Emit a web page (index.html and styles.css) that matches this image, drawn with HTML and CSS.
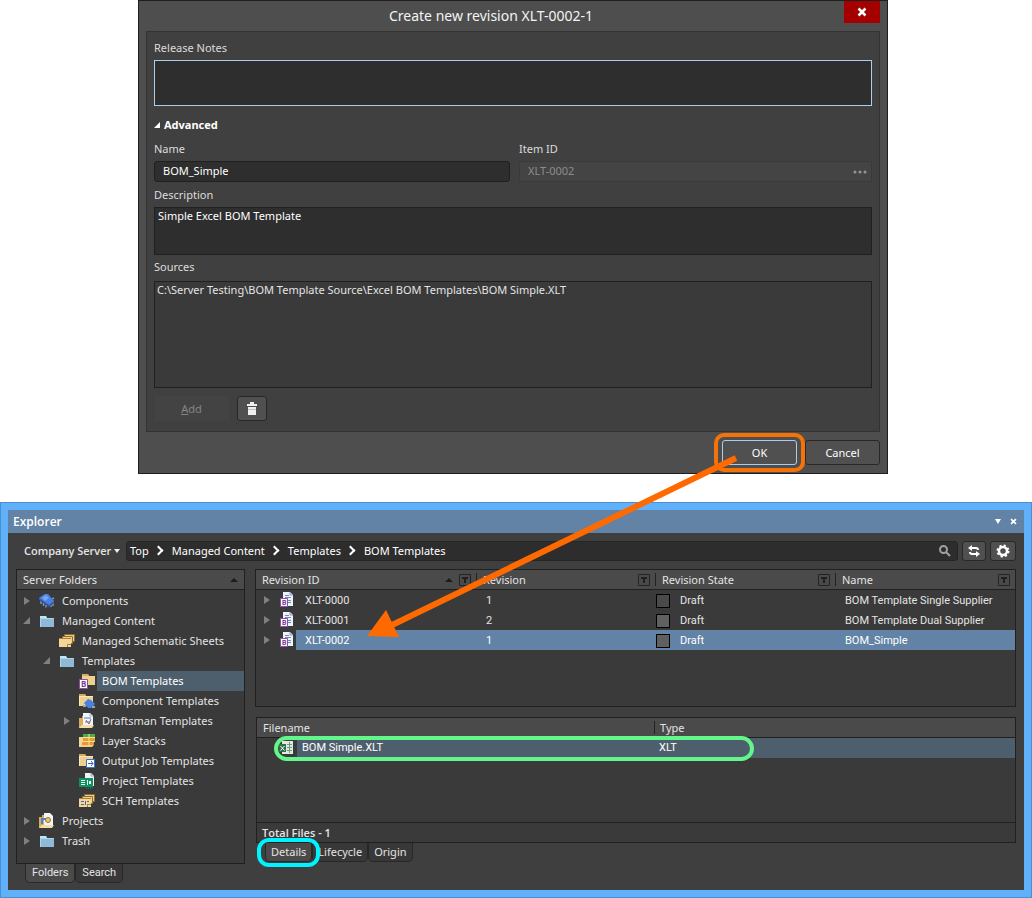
FILE: index.html
```html
<!DOCTYPE html>
<html lang="en">
<head>
    <meta charset="UTF-8">
    <meta name="viewport" content="width=device-width, initial-scale=1.0">
    <title>Create new revision</title>
    <link rel="stylesheet" href="styles.css">
</head>
<body>
    <!-- Shared icons -->
    <svg class="sprite" aria-hidden="true">
        <symbol id="folder-blue" viewBox="0 0 16 16">
            <path d="M1 3h6l1 2h7v9H1z" fill="#8fb9d6"/>
            <path d="M1 3h6l1 2H1z" fill="#bfe6f2"/>
            <path d="M1.500 14V5.500h13" fill="none" stroke="#a9d8ea"/>
        </symbol>
        <symbol id="folder-tan" viewBox="0 0 16 16">
            <path d="M0 1h6l1 2h7v10H0z" fill="#f0d090"/>
            <path d="M0 1h6l1 2H0z" fill="#d9ab5c"/>
            <path d="M.5 13V3.500h13.500" fill="none" stroke="#fbe8bb"/>
        </symbol>
        <symbol id="sheets" viewBox="0 0 16 16">
            <path d="M5.500 1.500h10v7h-10z" fill="#efcf8c" stroke="#8f6a2d"/>
            <path d="M3.500 3.500h10v7h-10z" fill="#efcf8c" stroke="#8f6a2d"/>
            <path d="M0 5h12v9H0z" fill="#f4d797"/>
            <path d="M0 5h12v1H0zM8 11h4v1H8zM8 11h1v3H8z" fill="#a9813e"/>
        </symbol>
        <symbol id="chip" viewBox="0 0 16 16">
            <path d="M2 8v3M4.500 10v3M7 12v2.500M13 6l2-1M14 9v4M12 11v3" stroke="#8c95a6" stroke-width="1.500"/>
            <path d="M0 5l6-4h3l6 7v2l-5 4L0 7z" fill="#2f57a8"/>
            <path d="M0 5l6-4h3l6 7-5 4z" fill="#4b7fe0"/>
            <path d="M3 5l4-3 3 3-4 3z" fill="#78a5f5"/>
        </symbol>
        <symbol id="bom-folder" viewBox="0 0 16 16">
            <path d="M3 1h6l1 2h6v9H3z" fill="#f0d090"/>
            <path d="M3 1h6l1 2H3z" fill="#d9ab5c"/>
            <path d="M.5 6.500h8v9h-8z" fill="#fff" stroke="#8a4fa3"/>
            <text x="2" y="14" font-size="8" font-weight="bold" fill="#7b3b98">B</text>
        </symbol>
        <symbol id="component-folder" viewBox="0 0 16 16">
            <use href="#folder-tan"/>
            <path d="M5 10l4-4 3 1 4 4-4 4H9z" fill="#4b7fe0"/>
            <path d="M4 12h3v2H4zM13 13h3v2h-3z" fill="#9aa5b8"/>
        </symbol>
        <symbol id="draftsman" viewBox="0 0 16 16">
            <path d="M0 5h3V3h9v12H0z" fill="#d9ab5c"/>
            <path d="M4 0h7l3 3v10H4z" fill="#f2f5fb"/>
            <path d="M11 0v3h3" fill="none" stroke="#9fb0d0"/>
            <path d="M5 5h7M7 7l3 4 2-5" fill="none" stroke="#5878c0"/>
            <path d="M6 9h5" stroke="#c8504a"/>
            <path d="M0 15l3-3h12l-2 3z" fill="#f6dda4"/>
        </symbol>
        <symbol id="layers" viewBox="0 0 16 16">
            <path d="M0 4h4v10H0z" fill="#f4d797"/>
            <path d="M0 14h13l2-2H3z" fill="#f0cf8d"/>
            <path d="M4 1h12v3H4z" fill="#4caa50"/>
            <path d="M4 5h12v3H4zM3 9h12v3H3z" fill="#e9973a"/>
            <path d="M10 1v11M4 4.500h12M4 8.500h12" stroke="#f6e388"/>
        </symbol>
        <symbol id="outjob" viewBox="0 0 16 16">
            <use href="#folder-tan"/>
            <path d="M7.500 6.500h8v8h-8z" fill="#fff" stroke="#3f72c4"/>
            <path d="M9 10.500h5M12 8l2 2.500-2 2.500" fill="none" stroke="#2e62b8"/>
        </symbol>
        <symbol id="project-template" viewBox="0 0 16 16">
            <path d="M6 0h6l3 3v10H6z" fill="#f0f4f6"/>
            <path d="M12 0v3h3" fill="none" stroke="#98a8b4"/>
            <path d="M0 5h14v9H0z" fill="#0f9160"/>
            <path d="M2 7.500h4M2 9.500h4M2 11.500h4M8.500 7v5" stroke="#e8fff4"/>
            <path d="M10 8h2v3h-2z" fill="#e8fff4"/>
            <path d="M7 15h8" stroke="#0f9160" stroke-dasharray="1 1"/>
        </symbol>
        <symbol id="sch-template" viewBox="0 0 16 16">
            <use href="#sheets"/>
            <path d="M2 8.500h3M2 11.500h3M6.500 8v4M8 8.500h2" stroke="#4d62b8"/>
        </symbol>
        <symbol id="projects" viewBox="0 0 16 16">
            <path d="M0 4h3V2h9v13H0z" fill="#d9ab5c"/>
            <path d="M5 0h6l3 3v9H5z" fill="#f2f5fb"/>
            <path d="M2 5h5v2H4v4H2z" fill="#4a83c9"/>
            <circle cx="9" cy="7" r="2.500" fill="#f0c565" stroke="#9a7431"/>
            <path d="M0 15l3-3h12l-2 3z" fill="#f6dda4"/>
        </symbol>
        <symbol id="bom-doc" viewBox="0 0 16 16">
            <path d="M4 0h7l3 3v11H4z" fill="#eef2fa"/>
            <path d="M11 0v3h3" fill="none" stroke="#8495b5"/>
            <path d="M6 3.500h4M6 5.500h6M9 8.500h3M9 10.500h3" stroke="#7488b0"/>
            <path d="M1.500 6.500h7v8h-7z" fill="#fff" stroke="#8a4fa3"/>
            <text x="3" y="13" font-size="7" font-weight="bold" fill="#7b3b98">B</text>
        </symbol>
        <symbol id="excel" viewBox="0 0 16 16">
            <path d="M4 1h11v13H4z" fill="#dfe9e2"/>
            <path d="M9 4.500h5M9 7.500h5M9 10.500h5M11.500 2v11" stroke="#6f9c7e"/>
            <path d="M1 4h7v8H1z" fill="#2f6f4a"/>
            <path d="M2.500 6l4 4.500M6.500 6l-4 4.500" stroke="#fff"/>
        </symbol>
        <symbol id="funnel" viewBox="0 0 12 12">
            <path d="M.5.5h11v11H.5z" fill="none" stroke="#242424"/>
            <path d="M3 3h6v2H7v4H5V5H3z" fill="#202020"/>
        </symbol>
        <symbol id="cross" viewBox="0 0 10 10">
            <path d="M1.500 1.500l7 7M8.500 1.500l-7 7" stroke="#fff" stroke-width="2.500"/>
        </symbol>
    </svg>

    <main class="stage">
        <section class="dialog" aria-label="Create new revision">
            <header class="dialog-title">
                <h1>Create new revision XLT-0002-1</h1>
                <button type="button" class="dialog-close" aria-label="Close"><svg width="10" height="10"><use href="#cross"/></svg></button>
            </header>

            <form class="dialog-form">
                <label for="notes">Release Notes</label>
                <textarea id="notes" class="notes"></textarea>

                <details open>
                    <summary><svg width="6" height="6"><path d="M6 0v6H0z" fill="#fff"/></svg>Advanced</summary>
                    <div class="form-row">
                        <div class="field">
                            <label for="name">Name</label>
                            <input type="text" id="name" value="BOM_Simple">
                        </div>
                        <div class="field">
                            <label for="itemId">Item ID</label>
                            <div class="item-id">
                                <input type="text" id="itemId" value="XLT-0002" disabled>
                                <button type="button" disabled aria-label="Browse"><svg width="14" height="4"><circle cx="2" cy="2" r="1.500"/><circle cx="7" cy="2" r="1.500"/><circle cx="12" cy="2" r="1.500"/></svg></button>
                            </div>
                        </div>
                    </div>
                    <label for="description">Description</label>
                    <textarea id="description" class="description">Simple Excel BOM Template</textarea>
                    <div class="label" id="sourcesLabel">Sources</div>
                    <ul class="sources" aria-labelledby="sourcesLabel">
                        <li>C:\Server Testing\BOM Template Source\Excel BOM Templates\BOM Simple.XLT</li>
                    </ul>
                    <div class="source-actions">
                        <button type="button" class="add" disabled><u>A</u>dd</button>
                        <button type="button" class="btn trash" aria-label="Delete">
                            <svg width="10" height="13"><path d="M3 0h4v2H3zM0 2h10v2H0zM1 5h8v8H1z" fill="#f0f0f0"/><path d="M1 7.500h8" stroke="#c4c4c4"/></svg>
                        </button>
                    </div>
                </details>
            </form>

            <footer class="dialog-footer">
                <div class="callout callout-ok"><button type="button" class="btn ok">OK</button></div>
                <button type="button" class="btn">Cancel</button>
            </footer>
        </section>

        <section class="explorer" aria-label="Explorer">
            <header class="explorer-title">
                <h2>Explorer</h2>
                <button type="button" aria-label="Panel menu"><svg width="6" height="5"><path d="M0 0h6L3 5z" fill="#fff"/></svg></button>
                <button type="button" aria-label="Close panel"><svg width="7" height="7"><use href="#cross"/></svg></button>
            </header>

            <div class="toolbar">
                <button type="button" class="server">Company Server<svg width="6" height="4"><path d="M0 0h6L3 4z" fill="#eee"/></svg></button>
                <nav class="breadcrumb" aria-label="Path">
                    <a href="#">Top</a>
                    <a href="#">Managed Content</a>
                    <a href="#">Templates</a>
                    <a href="#">BOM Templates</a>
                    <button type="button" class="search" aria-label="Search"><svg width="12" height="12"><circle cx="4.500" cy="4.500" r="3.500" fill="none" stroke="#a0a0a0" stroke-width="2"/><path d="M7 7l4 4" stroke="#a0a0a0" stroke-width="2"/></svg></button>
                </nav>
                <button type="button" class="btn tool" aria-label="Refresh">
                    <svg width="12" height="12"><path d="M4 0v2h4q3 0 3 3H9Q9 4 8 4H4v2L0 3zM8 12v-2H4q-3 0-3-3h2q0 1 1 1h4V6l4 3z" fill="#fff"/></svg>
                </button>
                <button type="button" class="btn tool" aria-label="Settings">
                    <svg width="14" height="14" viewBox="0 0 14 14"><circle cx="7" cy="7" r="4" fill="none" stroke="#fff" stroke-width="2.500"/><circle cx="7" cy="7" r="5.500" fill="none" stroke="#fff" stroke-width="2" stroke-dasharray="2.160 2.160"/></svg>
                </button>
            </div>

            <div class="columns">
                <aside>
                    <div class="panel folders">
                        <div class="panel-head">Server Folders<svg width="8" height="4"><path d="M0 4l4-4 4 4z" fill="#1c1c1c"/></svg></div>
                        <ul class="tree">
                            <li><i class="closed"></i><svg class="icon"><use href="#chip"/></svg><span>Components</span></li>
                            <li><i class="open"></i><svg class="icon"><use href="#folder-blue"/></svg><span>Managed Content</span></li>
                            <li class="level-1"><i></i><svg class="icon"><use href="#sheets"/></svg><span>Managed Schematic Sheets</span></li>
                            <li class="level-1"><i class="open"></i><svg class="icon"><use href="#folder-blue"/></svg><span>Templates</span></li>
                            <li class="level-2 selected"><i></i><svg class="icon"><use href="#bom-folder"/></svg><span>BOM Templates</span></li>
                            <li class="level-2"><i></i><svg class="icon"><use href="#component-folder"/></svg><span>Component Templates</span></li>
                            <li class="level-2"><i class="closed"></i><svg class="icon"><use href="#draftsman"/></svg><span>Draftsman Templates</span></li>
                            <li class="level-2"><i></i><svg class="icon"><use href="#layers"/></svg><span>Layer Stacks</span></li>
                            <li class="level-2"><i></i><svg class="icon"><use href="#outjob"/></svg><span>Output Job Templates</span></li>
                            <li class="level-2"><i></i><svg class="icon"><use href="#project-template"/></svg><span>Project Templates</span></li>
                            <li class="level-2"><i></i><svg class="icon"><use href="#sch-template"/></svg><span>SCH Templates</span></li>
                            <li><i class="closed"></i><svg class="icon"><use href="#projects"/></svg><span>Projects</span></li>
                            <li><i class="closed"></i><svg class="icon"><use href="#folder-blue"/></svg><span>Trash</span></li>
                        </ul>
                    </div>
                    <div class="tabs folder-tabs">
                        <button type="button" class="active">Folders</button>
                        <button type="button">Search</button>
                    </div>
                </aside>

                <div class="content">
                    <div class="panel revisions">
                        <table>
                            <colgroup><col class="col-id"><col class="col-rev"><col class="col-state"><col></colgroup>
                            <thead>
                                <tr>
                                    <th><div class="th">Revision ID<svg class="sort" width="8" height="4"><path d="M0 4l4-4 4 4z" fill="#1c1c1c"/></svg><button type="button" aria-label="Filter by revision ID"><svg width="12" height="12"><use href="#funnel"/></svg></button></div></th>
                                    <th><div class="th">Revision<button type="button" aria-label="Filter by revision"><svg width="12" height="12"><use href="#funnel"/></svg></button></div></th>
                                    <th><div class="th">Revision State<button type="button" aria-label="Filter by state"><svg width="12" height="12"><use href="#funnel"/></svg></button></div></th>
                                    <th><div class="th">Name<button type="button" aria-label="Filter by name"><svg width="12" height="12"><use href="#funnel"/></svg></button></div></th>
                                </tr>
                            </thead>
                            <tbody>
                                <tr>
                                    <td><div class="id-cell"><i class="closed"></i><svg class="icon"><use href="#bom-doc"/></svg><span>XLT-0000</span></div></td>
                                    <td>1</td>
                                    <td><div class="state"><b class="swatch"></b>Draft</div></td>
                                    <td>BOM Template Single Supplier</td>
                                </tr>
                                <tr>
                                    <td><div class="id-cell"><i class="closed"></i><svg class="icon"><use href="#bom-doc"/></svg><span>XLT-0001</span></div></td>
                                    <td>2</td>
                                    <td><div class="state"><b class="swatch light"></b>Draft</div></td>
                                    <td>BOM Template Dual Supplier</td>
                                </tr>
                                <tr class="selected">
                                    <td><div class="id-cell"><i class="closed"></i><svg class="icon"><use href="#bom-doc"/></svg><span>XLT-0002</span></div></td>
                                    <td>1</td>
                                    <td><div class="state"><b class="swatch light"></b>Draft</div></td>
                                    <td>BOM_Simple</td>
                                </tr>
                            </tbody>
                        </table>
                    </div>

                    <div class="panel files">
                        <div class="file-list">
                            <table>
                                <colgroup><col class="col-file"><col></colgroup>
                                <thead>
                                    <tr><th><div class="th">Filename</div></th><th><div class="th">Type</div></th></tr>
                                </thead>
                                <tbody>
                                    <tr class="selected">
                                        <td><div class="file-cell"><svg class="icon"><use href="#excel"/></svg><span>BOM Simple.XLT</span></div></td>
                                        <td class="type">XLT</td>
                                    </tr>
                                </tbody>
                            </table>
                            <div class="file-mark"></div>
                        </div>
                        <div class="total">Total Files - 1</div>
                    </div>
                    <div class="tabs detail-tabs">
                        <div class="callout callout-details"><button type="button" class="active">Details</button></div>
                        <button type="button">Lifecycle</button>
                        <button type="button">Origin</button>
                    </div>
                </div>
            </div>
        </section>

        <!-- Arrow from the OK button to the new revision -->
        <svg class="arrow" width="1032" height="898" aria-hidden="true">
            <path d="M736 458L390 626" stroke="#ff6a00" stroke-width="6"/>
            <path d="M367 636l19-26 13 27z" fill="#ff6a00"/>
        </svg>
    </main>
</body>
</html>
```

FILE: styles.css
```css
* {
    box-sizing: border-box;
}
body {
    margin: 0;
    background: #fff;
    color: #e4e4e4;
    font-family: "Noto Sans", "Open Sans", sans-serif;
    font-size: 11px;
    line-height: 20px;
}
h1, h2, ul {
    margin: 0;
    padding: 0;
    list-style: none;
}
button, input, textarea {
    margin: 0;
    padding: 0;
    border: 0;
    background: none;
    color: inherit;
    font: inherit;
}
button {
    cursor: pointer;
}
svg {
    display: block;
    flex: none;
}
.sprite {
    display: none;
}
.stage {
    position: relative;
}
.arrow {
    position: absolute;
    top: 0;
    left: 0;
    pointer-events: none;
}
.icon {
    width: 16px;
    height: 16px;
}
.btn {
    display: flex;
    align-items: center;
    justify-content: center;
    height: 25px;
    border: 1px solid #282828;
    border-radius: 3px;
    background: #505050;
    color: #fff;
}

/* Dialog */
.dialog {
    margin: 0 144px 28px 138px;
    padding: 0 7px;
    border: 1px solid #1e1e1e;
    background: #4e4e4e;
}
.dialog-title {
    display: flex;
    height: 30px;
}
.dialog-title h1 {
    flex: 1;
    padding-right: 8px;
    font-size: 14px;
    font-weight: normal;
    line-height: 30px;
    text-align: center;
    color: #f4f4f4;
}
.dialog-close {
    display: flex;
    align-items: center;
    justify-content: center;
    width: 36px;
    height: 22px;
    background: #a40000;
}
.dialog-form {
    padding: 4px 7px 10px;
    border: 1px solid #333;
    background: #404040;
}
.dialog-form label, .label {
    display: block;
    line-height: 24px;
    color: #dcdcdc;
}
.dialog-form textarea {
    display: block;
    width: 100%;
    padding: 0 3px;
    border: 1px solid #202020;
    background: #2e2e2e;
    color: #fff;
    line-height: 15px;
    resize: none;
}
.dialog-form .notes {
    height: 46px;
    border-color: #a9cdea;
}
.dialog-form .description {
    height: 48px;
}
summary {
    display: flex;
    align-items: center;
    gap: 4px;
    padding-top: 7px;
    line-height: 24px;
    font-weight: bold;
    color: #fff;
    cursor: pointer;
}
.form-row {
    display: grid;
    grid-template-columns: 356px 1fr;
    gap: 9px;
    padding-bottom: 1px;
}
.form-row input {
    display: block;
    width: 100%;
    height: 21px;
    padding: 0 8px 2px;
    border: 1px solid #202020;
    border-radius: 3px;
    background: #2e2e2e;
    color: #fff;
}
.item-id {
    display: flex;
    align-items: center;
    height: 21px;
    padding-right: 4px;
    border: 1px solid #3a3a3a;
    background: #444;
    color: #8c8c8c;
}
.item-id input {
    flex: 1;
    border: 0;
    background: none;
    color: inherit;
}
.item-id svg {
    fill: #969696;
}
.sources {
    height: 107px;
    margin-top: 2px;
    padding: 0 2px;
    border: 1px solid #202020;
    background: #3a3a3a;
    line-height: 16px;
}
.source-actions {
    display: flex;
    gap: 8px;
    margin-top: 8px;
}
.add {
    width: 75px;
    background: #434343;
    color: #858585;
}
.trash {
    width: 30px;
}
.dialog-footer {
    display: flex;
    justify-content: flex-end;
    gap: 8px;
    padding: 8px 0;
}
.dialog-footer .btn {
    width: 75px;
}
.dialog-footer .ok {
    border-color: #a9cdea;
}

/* Highlight rings */
.callout {
    display: flex;
    position: relative;
}
.callout::after {
    content: "";
    position: absolute;
    pointer-events: none;
}
.callout-ok::after {
    inset: -7px -8px;
    border: 4px solid #f47208;
    border-radius: 10px;
}
.callout-details::after {
    inset: -5px -8px;
    border: 4px solid #00f4ff;
    border-radius: 12px;
    z-index: 1;
}
.file-mark {
    position: absolute;
    top: 18px;
    left: 17px;
    width: 480px;
    height: 25px;
    border: 4px solid #63f78b;
    border-radius: 13px;
    pointer-events: none;
}

/* Explorer */
.explorer {
    border: 8px solid #61b0fa;
    outline: 1px solid #4b8fd0;
    outline-offset: -1px;
    background: #3f3f3f;
}
.explorer-title {
    display: flex;
    align-items: center;
    gap: 9px;
    height: 23px;
    padding: 0 7px 0 5px;
    background: #6283a5;
    color: #fff;
}
.explorer-title h2 {
    flex: 1;
    font-family: "Open Sans", "Noto Sans", sans-serif;
    font-size: 12px;
    font-weight: 600;
    line-height: 22px;
}
.toolbar {
    display: flex;
    gap: 4px;
    padding: 8px 8px 8px 16px;
}
.server {
    display: flex;
    align-items: center;
    gap: 3px;
    width: 98px;
    font-family: "Open Sans", "Noto Sans", sans-serif;
    font-weight: 600;
    white-space: nowrap;
}
.breadcrumb {
    display: flex;
    align-items: center;
    flex: 1;
    height: 20px;
    padding: 0 6px 0 3px;
    border: 1px solid #252525;
    border-radius: 3px;
    background: #2d2d2d;
}
.breadcrumb a {
    color: #fff;
    text-decoration: none;
}
.breadcrumb a + a::before {
    content: "";
    display: inline-block;
    width: 5px;
    height: 5px;
    margin: 0 10px 1px 6px;
    border: solid #fff;
    border-width: 2px 2px 0 0;
    transform: rotate(45deg);
}
.search {
    margin-left: auto;
}
.tool {
    width: 24px;
    height: 20px;
}
.tool:last-child {
    width: 26px;
}
.columns {
    display: grid;
    grid-template-columns: 229px 1fr;
    gap: 10px;
    padding: 0 8px 7px;
}
.panel {
    border: 1px solid #202020;
    background: #3a3a3a;
}
.panel-head {
    display: flex;
    align-items: center;
    justify-content: space-between;
    height: 20px;
    padding: 0 6px;
    border-bottom: 1px solid #202020;
    background: #4a4a4a;
}
.folders {
    height: 295px;
}
.tree {
    padding-top: 1px;
}
.tree li {
    display: flex;
    align-items: center;
    padding-left: 6px;
}
.tree .level-1 {
    padding-left: 26px;
}
.tree .level-2 {
    padding-left: 46px;
}
.tree span {
    flex: 1;
    margin-left: 2px;
    padding-left: 5px;
    white-space: nowrap;
}
.tree .selected span {
    background: #4d5f6d;
    color: #fff;
}
.tree i, .id-cell i {
    flex: none;
    width: 16px;
    height: 8px;
}
.closed::before, .open::before {
    content: "";
    display: block;
    width: 7px;
    height: 8px;
    background: #808080;
    clip-path: polygon(1px 0, 100% 50%, 1px 100%);
}
.open::before {
    height: 7px;
    clip-path: polygon(100% 0, 100% 100%, 0 100%);
}
.tabs {
    display: flex;
    padding-left: 9px;
}
.tabs button {
    height: 19px;
    padding: 0 6px;
    border: 1px solid #282828;
    border-top: 0;
    border-radius: 0 0 5px 5px;
    background: #383838;
    line-height: 18px;
}
.tabs .active {
    background: #4a4a4a;
}
.folder-tabs {
    font-family: Roboto, "Liberation Sans", sans-serif;
}
.detail-tabs {
    padding-left: 10px;
}
.detail-tabs button {
    padding: 0 5px;
}

/* Lists */
table {
    width: 100%;
    border-collapse: separate;
    border-spacing: 0;
    table-layout: fixed;
}
th, td {
    height: 20px;
    padding: 0;
    font-weight: normal;
    text-align: left;
    white-space: nowrap;
}
th {
    border-bottom: 1px solid #202020;
    background: #4a4a4a;
}
.th {
    display: flex;
    align-items: center;
    height: 19px;
    padding: 0 5px 0 6px;
}
th + th {
    background: linear-gradient(#222, #222) 0 3px / 1px 13px no-repeat, #4a4a4a;
}
.revisions th + th .th {
    padding-left: 7px;
}
.th button {
    margin-left: auto;
}
.th .sort {
    margin-left: auto;
}
.th .sort + button {
    margin-left: 6px;
}
td {
    padding: 2px 0 0 10px;
    font-family: Roboto, "Liberation Sans", sans-serif;
    line-height: 18px;
}
td:first-child {
    padding: 0;
}
.col-id {
    width: 220px;
}
.col-rev {
    width: 179px;
}
.col-state {
    width: 180px;
}
.col-file {
    width: 397px;
}
.id-cell, .file-cell, .state {
    display: flex;
    align-items: center;
}
.id-cell {
    padding-left: 7px;
}
.id-cell span {
    flex: 1;
    margin-left: 1px;
    padding: 2px 0 0 9px;
}
.revisions .selected td + td, .revisions .selected span {
    background: #6283a5;
    color: #fff;
}
td:nth-child(3) {
    padding-left: 1px;
}
.swatch {
    width: 14px;
    height: 14px;
    margin-right: 10px;
    border: 1px solid #000;
    background: #4a4a4a;
}
.light {
    background: #606060;
}
.revisions {
    height: 138px;
    margin-bottom: 10px;
}
.files {
    margin-left: 1px;
}
.file-list {
    position: relative;
    height: 104px;
}
.file-cell {
    padding-left: 21px;
}
.file-cell span {
    flex: 1;
    margin-left: 3px;
    padding: 0 0 0 5px;
    line-height: 20px;
}
.files .selected td + td, .files .selected span {
    background: #4d5f6d;
    color: #fff;
}
.files .type {
    padding: 0 0 0 5px;
    line-height: 20px;
}
.total {
    height: 20px;
    padding-left: 5px;
    border-top: 1px solid #202020;
    font-family: "Open Sans", "Noto Sans", sans-serif;
    font-weight: 600;
}
```
